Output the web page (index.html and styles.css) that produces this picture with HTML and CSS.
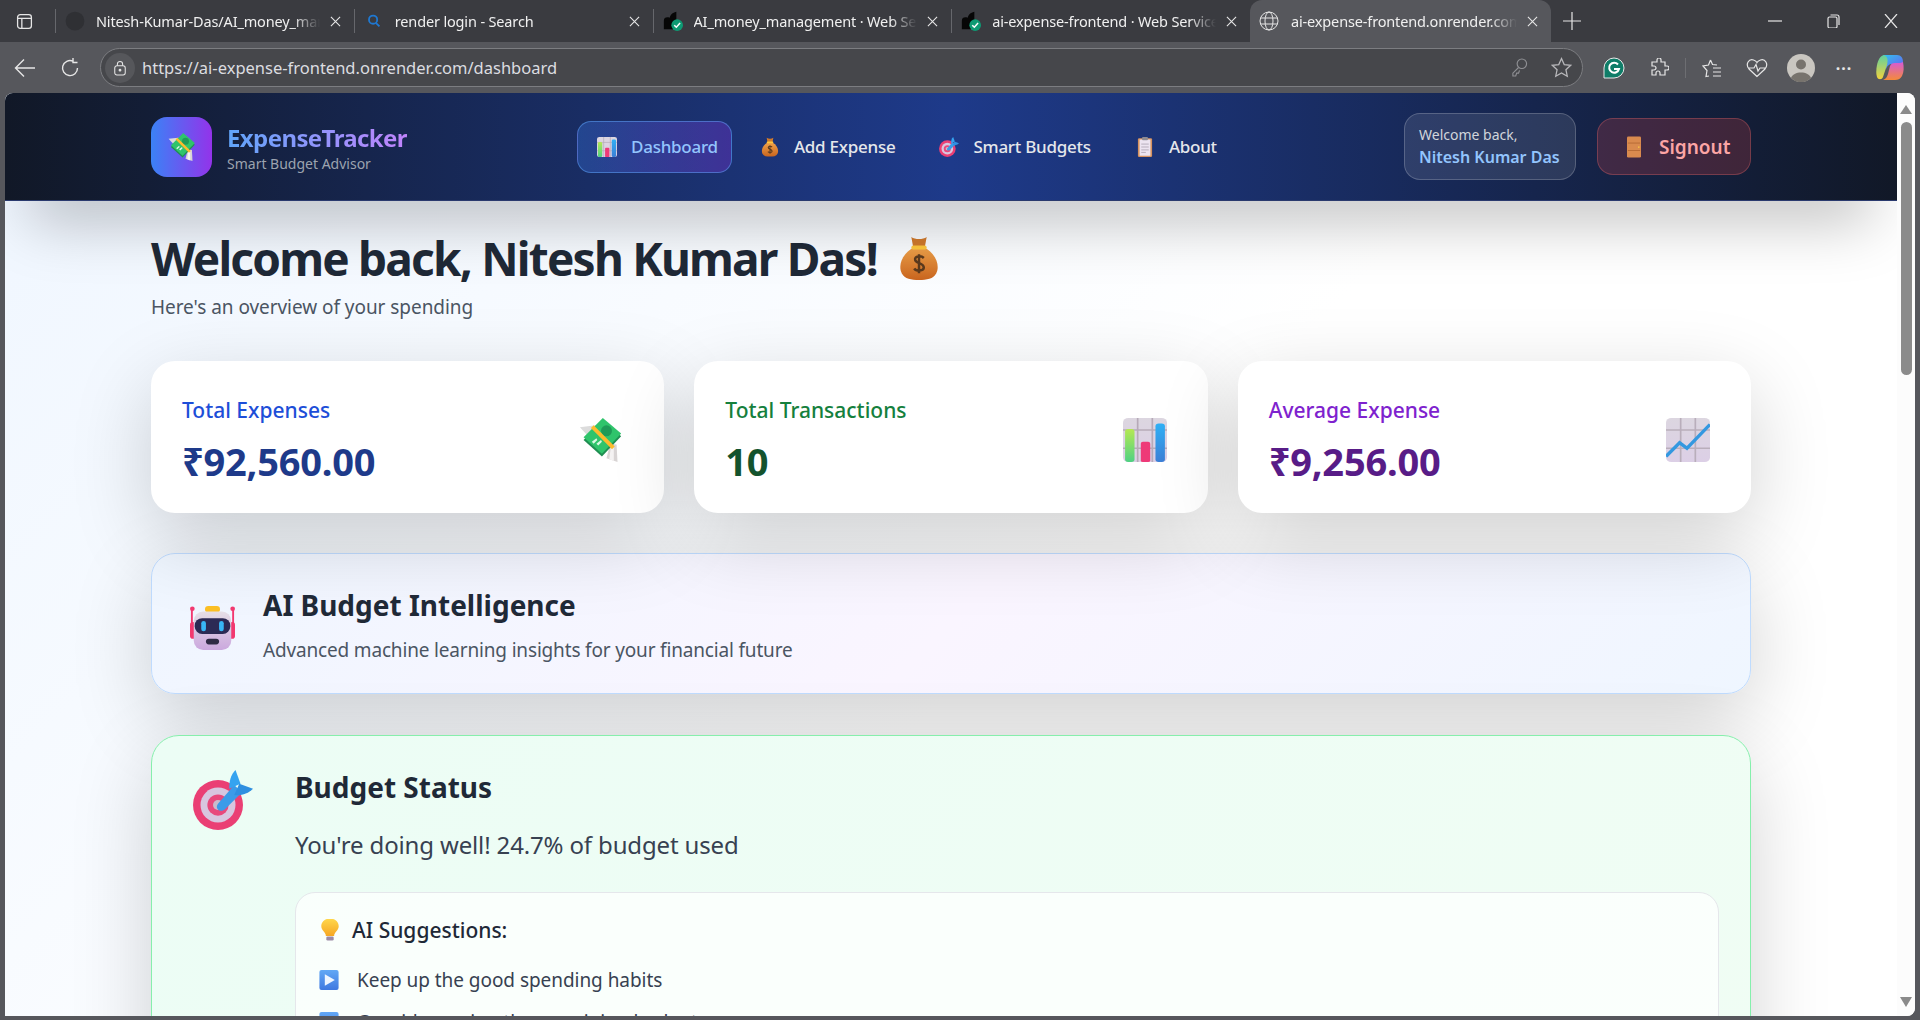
FILE: index.html
```html
<!DOCTYPE html>
<html lang="en">

<head>
    <meta charset="UTF-8">
    <title>ExpenseTracker - Dashboard</title>
    <link rel="stylesheet" href="styles.css">
</head>

<body>
    <!-- shared emoji drawings -->
    <svg class="defs" aria-hidden="true">
        <defs>
            <linearGradient id="gBag" x1="0" y1="0" x2="0" y2="1">
                <stop offset="0" stop-color="#f0a24a" />
                <stop offset="1" stop-color="#c9651f" />
            </linearGradient>
            <linearGradient id="gPaper" x1="0" y1="0" x2="0" y2="1">
                <stop offset="0" stop-color="#dcd6e0" />
                <stop offset="1" stop-color="#dccfe6" />
            </linearGradient>
            <linearGradient id="gGreen" x1="0" y1="0" x2="0" y2="1">
                <stop offset="0" stop-color="#b5e853" />
                <stop offset="1" stop-color="#4fd183" />
            </linearGradient>
            <linearGradient id="gBlue" x1="0" y1="0" x2="0" y2="1">
                <stop offset="0" stop-color="#2fb0f5" />
                <stop offset="1" stop-color="#3c7fd6" />
            </linearGradient>
            <linearGradient id="gRobot" x1="0" y1="0" x2="0" y2="1">
                <stop offset="0" stop-color="#e6dfe6" />
                <stop offset="1" stop-color="#cba8de" />
            </linearGradient>
            <linearGradient id="gPlay" x1="0" y1="0" x2="0" y2="1">
                <stop offset="0" stop-color="#62a8f5" />
                <stop offset="1" stop-color="#3f78e0" />
            </linearGradient>
            <linearGradient id="gBulb" x1="0" y1="0" x2="0" y2="1">
                <stop offset="0" stop-color="#ffd84d" />
                <stop offset="1" stop-color="#f6a623" />
            </linearGradient>
            <linearGradient id="gCoTop" x1="0" y1="0" x2="1" y2="1">
                <stop offset="0" stop-color="#2fc6f0" />
                <stop offset="1" stop-color="#6a5cf0" />
            </linearGradient>
            <linearGradient id="gCoLeft" x1="0" y1="0" x2="0" y2="1">
                <stop offset="0" stop-color="#5fd0a0" />
                <stop offset="1" stop-color="#f2d23c" />
            </linearGradient>
            <linearGradient id="gCoRight" x1="0" y1="0" x2="0" y2="1">
                <stop offset="0" stop-color="#d65ad6" />
                <stop offset="1" stop-color="#f58a3a" />
            </linearGradient>
        </defs>
        <symbol id="e-wings" viewBox="0 0 48 48">
            <path d="M1 10 L18 8 L24 22 L12 22 Z" fill="#dcdcdc" />
            <path d="M34 28 L41 29 L42 48 L30 44 Z" fill="#d8d4d4" />
            <path d="M35 30 L38 31 L38 47 L33 45 Z" fill="#f4f2f2" />
            <path d="M26 2 L46 20 L25 42 L5 24 Z" fill="#1f8f52" />
            <path d="M26 0 L46 17 L25 39 L5 21 Z" fill="#2fc46b" />
            <circle cx="30" cy="14" r="6" fill="#1f9a57" />
            <path d="M13 11 L16 8 L39 31 L36 34 Z" fill="#fdbb2d" />
            <path d="M14 26 l5 -4 l1 2 l-4 4 z M19 28 l5 -4 l1 2 l-4 4 z" fill="#d9f7e2" />
        </symbol>
        <symbol id="e-bars" viewBox="3 0 42 48" preserveAspectRatio="none">
            <rect x="3" y="0" width="42" height="48" rx="5" fill="url(#gPaper)" />
            <path d="M3 13 H45 M3 33 H45 M17 0 V48 M31 0 V48" stroke="#b6aab8" stroke-width="1.6" />
            <rect x="5" y="12" width="9" height="36" rx="3" fill="url(#gGreen)" />
            <rect x="20" y="26" width="9" height="22" rx="2" fill="#ee3a78" />
            <rect x="34" y="6" width="9" height="42" rx="3" fill="url(#gBlue)" />
        </symbol>
        <symbol id="e-line" viewBox="3 0 42 48" preserveAspectRatio="none">
            <rect x="3" y="0" width="42" height="48" rx="5" fill="url(#gPaper)" />
            <path d="M3 13 H45 M3 33 H45 M17 0 V48 M31 0 V48" stroke="#b9aebb" stroke-width="1.6" />
            <path d="M3 42 L16 27 L23 33 L45 7" fill="none" stroke="#3498e0" stroke-width="3.4" />
        </symbol>
        <symbol id="e-bag" viewBox="0 0 48 48">
            <path d="M16 2 C20 5 28 5 32 2 L30 13 H18 Z" fill="#d07a2c" />
            <path d="M18 13 H30 C42 20 46 32 42 40 C39 46 32 47 24 47 C16 47 9 46 6 40 C2 32 6 20 18 13 Z" fill="url(#gBag)" />
            <rect x="16" y="11" width="16" height="4" rx="2" fill="#ffc83d" />
            <path d="M29 24 C26 21 19 22 20 26 C21 30 29 29 29 34 C29 38 21 38 19 35 M24 20 V40" fill="none" stroke="#5b3a1e" stroke-width="2.6" />
        </symbol>
        <symbol id="e-dart" viewBox="0 0 48 48">
            <circle cx="20" cy="28" r="20" fill="#ea3f74" />
            <circle cx="20" cy="28" r="14" fill="#d8c6df" />
            <circle cx="20" cy="28" r="8.500" fill="#e8497c" />
            <circle cx="20" cy="28" r="4" fill="#c9bccb" />
            <path d="M20 27 L33 12 L39 18 L26 31 C22 35 17 31 20 27 Z" fill="#3b9be8" />
            <path d="M34 0 L38 11 L29 15 C29 9 30 4 34 0 Z" fill="#35a3f0" />
            <path d="M48 15 L37 11 L33 20 C38 21 44 19 48 15 Z" fill="#2f8fe0" />
        </symbol>
        <symbol id="e-clip" viewBox="0 0 48 48">
            <rect x="7" y="3" width="34" height="45" rx="3" fill="#d6925f" />
            <rect x="11" y="6" width="26" height="39" fill="#ece4f0" />
            <rect x="17" y="0" width="14" height="8" rx="2" fill="#8d8a92" />
            <path d="M15 17 H33 M15 24 H33 M15 31 H33 M15 37 H26" stroke="#aca3b2" stroke-width="2" />
        </symbol>
        <symbol id="e-door" viewBox="0 0 32 48">
            <rect x="0" y="0" width="32" height="48" rx="3" fill="#d98a4e" />
            <path d="M2 15 H30 M2 32 H30" stroke="#a95f2d" stroke-width="1.6" />
            <circle cx="27" cy="24" r="2" fill="#f6c244" />
        </symbol>
        <symbol id="e-robot" viewBox="0 0 48 48">
            <path d="M2 4 V34 M46 4 V34" stroke="#f2386f" stroke-width="2" />
            <circle cx="2.500" cy="4" r="2.500" fill="#f2386f" />
            <circle cx="45.500" cy="4" r="2.500" fill="#f2386f" />
            <rect x="0" y="18" width="6" height="18" rx="3" fill="#f2386f" />
            <rect x="42" y="18" width="6" height="18" rx="3" fill="#f2386f" />
            <rect x="16" y="1" width="16" height="7" rx="3.500" fill="#fbbf24" />
            <rect x="4" y="7" width="40" height="41" rx="10" fill="url(#gRobot)" />
            <rect x="5" y="14" width="38" height="17" rx="8" fill="#2c2a54" />
            <rect x="12" y="17" width="5" height="11" rx="2.500" fill="#38b6f5" />
            <rect x="31" y="17" width="5" height="11" rx="2.500" fill="#38b6f5" />
            <rect x="17" y="36" width="14" height="6" rx="3" fill="#2f2b45" />
        </symbol>
        <symbol id="e-bulb" viewBox="0 0 48 48">
            <path d="M24 0 C11 0 5 9 5 17 C5 26 15 30 15 38 H33 C33 30 43 26 43 17 C43 9 37 0 24 0 Z" transform="translate(0 -1)" fill="url(#gBulb)" />
            <rect x="16" y="38" width="16" height="9" rx="3" fill="#9b8aa5" />
        </symbol>
        <symbol id="e-play" viewBox="0 0 48 48">
            <rect x="1" y="0" width="46" height="48" rx="5" fill="url(#gPlay)" />
            <path d="M14 10 L38 24 L14 38 Z" fill="#eef5ff" />
        </symbol>
        <symbol id="fav-render" viewBox="0 0 24 24">
            <path d="M1 12 C1 8 4 7 8 8 C9 5 11 2 16 1 V14 L12 22 H1 Z" fill="#060606" />
            <circle cx="17" cy="17" r="7" fill="#0e9a73" />
            <path d="M13.500 17 L16 19.500 L20.500 14.500" fill="none" stroke="#fff" stroke-width="1.800" />
        </symbol>
    </svg>

    <!-- BROWSER TABS -->
    <div class="tabstrip">
        <svg class="ico side-ico" viewBox="0 0 16 16"><rect x="1.500" y="1.500" width="13" height="13" rx="2.500" /><path d="M1.500 5 H14.500 M5.500 5 V14.500" /></svg>
        <div class="tab">
            <svg class="fav" viewBox="0 0 16 16"><circle cx="8" cy="8" r="7.500" fill="#2f3034" /></svg>
            <span class="tab-title">Nitesh-Kumar-Das/AI_money_management</span>
            <svg class="ico tab-x" viewBox="0 0 12 12"><path d="M1 1 L11 11 M11 1 L1 11" /></svg>
        </div>
        <div class="tab">
            <svg class="fav" viewBox="-3 -3 22 22"><circle cx="7" cy="6.500" r="4.500" fill="none" stroke="#1f78d1" stroke-width="2" /><path d="M10 10 L14 14" stroke="#1f78d1" stroke-width="2" /></svg>
            <span class="tab-title">render login - Search</span>
            <svg class="ico tab-x" viewBox="0 0 12 12"><path d="M1 1 L11 11 M11 1 L1 11" /></svg>
        </div>
        <div class="tab">
            <svg class="fav"><use href="#fav-render" /></svg>
            <span class="tab-title">AI_money_management · Web Service</span>
            <svg class="ico tab-x" viewBox="0 0 12 12"><path d="M1 1 L11 11 M11 1 L1 11" /></svg>
        </div>
        <div class="tab">
            <svg class="fav"><use href="#fav-render" /></svg>
            <span class="tab-title">ai-expense-frontend · Web Service</span>
            <svg class="ico tab-x" viewBox="0 0 12 12"><path d="M1 1 L11 11 M11 1 L1 11" /></svg>
        </div>
        <div class="tab active">
            <svg class="ico fav globe" viewBox="0 0 20 20"><circle cx="10" cy="10" r="9" /><ellipse cx="10" cy="10" rx="4" ry="9" /><path d="M1.500 7 H18.500 M1.500 13 H18.500" /></svg>
            <span class="tab-title">ai-expense-frontend.onrender.com/dashboard</span>
            <svg class="ico tab-x" viewBox="0 0 12 12"><path d="M1 1 L11 11 M11 1 L1 11" /></svg>
        </div>
        <svg class="ico plus" viewBox="0 0 18 18"><path d="M9 0 V18 M0 9 H18" /></svg>
        <div class="win-btns">
            <svg class="ico" viewBox="0 0 14 14"><path d="M0 7 H14" /></svg>
            <svg class="ico" viewBox="0 0 14 14"><rect x="2" y="3" width="9" height="11" rx="1.500" /><path d="M4.500 1 H11 C12.500 1 13 2 13 3 V11" /></svg>
            <svg class="ico" viewBox="0 0 14 14"><path d="M1 0 L13 14 M13 0 L1 14" /></svg>
        </div>
    </div>

    <!-- ADDRESS BAR -->
    <div class="toolbar">
        <svg class="ico back" viewBox="0 0 22 20"><path d="M21 10 H2 M10 1.500 L1.500 10 L10 18.500" /></svg>
        <svg class="ico reload" viewBox="0 0 20 20"><path d="M17.500 10 A7.500 7.500 0 1 1 13 3.200 M13 0 V4.500 H17.500" /></svg>
        <div class="omnibox">
            <span class="lock-wrap"><svg class="ico" viewBox="0 0 16 18"><rect x="2" y="6.500" width="12" height="10.500" rx="2.500" /><path d="M5 6.500 V4.500 A3 3 0 0 1 11 4.500 V6.500" /><circle cx="8" cy="11.500" r="1" fill="#e8e8e8" /></svg></span>
            <span class="url">https://ai-expense-frontend.onrender.com/dashboard</span>
            <svg class="ico key" viewBox="0 0 18 20"><circle cx="11.500" cy="6" r="5" /><path d="M8 10 L2 16 V19 H5 L6 16 H8 L9 13" /></svg>
            <svg class="ico star" viewBox="0 0 20 20"><path d="M10 1.500 L12.600 7.200 L18.800 7.900 L14.200 12.100 L15.500 18.300 L10 15.200 L4.500 18.300 L5.800 12.100 L1.200 7.900 L7.400 7.200 Z" /></svg>
        </div>
        <div class="tool-icons">
            <svg class="t-g" viewBox="0 0 22 22"><path d="M11 1 A10 10 0 0 1 11 21 H1 V11 A10 10 0 0 1 11 1 Z" fill="#0f7d68" stroke="#e8e8e8" stroke-width="1" /><path d="M15 7.500 A5 5 0 1 0 16 12 H11" fill="none" stroke="#fff" stroke-width="2" /></svg>
            <svg class="ico t-ext" viewBox="0 0 20 20"><path d="M8 2 A2 2 0 0 1 12 2 V4 H16 V8 H18 A2 2 0 0 1 18 12 H16 V17 H11 V15 A2 2 0 0 0 7 15 V17 H3 V12 H5 A2 2 0 0 0 5 8 H3 V4 H8 Z" /></svg>
            <span class="t-sep"></span>
            <svg class="ico t-fav" viewBox="0 0 20 20"><path d="M8.500 2 L10.500 6.500 L15 7 M7 18 L4 18.500 L5 12.500 L1 8 L6.500 7 L8.500 2 M11 10 H19 M11 14 H19 M11 18 H19" /></svg>
            <svg class="ico t-heart" viewBox="0 0 22 20"><path d="M11 18.500 L3 11 C-1 6 3 0.500 7.500 2 C9 2.500 10.500 3.500 11 4.500 C11.500 3.500 13 2.500 14.500 2 C19 0.500 23 6 19 11 Z M2 10 H8 L10 6.500 L12 13 L14 10 H20" /></svg>
            <svg class="t-avatar" viewBox="0 0 28 28"><circle cx="14" cy="14" r="14" fill="#c9c6c0" /><circle cx="14" cy="10.500" r="5" fill="#77736d" /><path d="M4 24 C6 16.500 22 16.500 24 24 A14 14 0 0 1 4 24 Z" fill="#77736d" /></svg>
            <span class="t-dots">···</span>
            <svg class="t-copilot" viewBox="0 0 30 27">
                <path d="M9 1 H22 C26 1 28 4 28 8 L28 10 L17 10 C14 10 12 12 11 15 L7 7 C7 4 7 2 9 1 Z" fill="url(#gCoTop)" />
                <path d="M9 1 C5 2 3 6 2 11 C1 16 1 20 2 23 C3 26 7 26 8 23 L12 11 C13 6 13 3 9 1 Z" fill="url(#gCoLeft)" />
                <path d="M28 8 C29 13 29 18 27 22 C25 25 23 26 20 26 H8 C11 25 12 23 13 20 L15 12 C16 10 17 9 20 9 C24 9 27 9 28 8 Z" fill="url(#gCoRight)" />
            </svg>
        </div>
    </div>

    <!-- PAGE -->
    <div class="viewport">
        <div class="page">
            <header class="topbar">
                <div class="topbar-in">
                    <div class="brand">
                        <div class="logo"><svg class="logo-ico"><use href="#e-wings" /></svg></div>
                        <div class="brand-text">
                            <div class="brand-name">ExpenseTracker</div>
                            <div class="brand-sub">Smart Budget Advisor</div>
                        </div>
                    </div>
                    <nav class="nav">
                        <a class="nav-item on"><svg class="nav-ico"><use href="#e-bars" /></svg>Dashboard</a>
                        <a class="nav-item"><svg class="nav-ico"><use href="#e-bag" /></svg>Add Expense</a>
                        <a class="nav-item"><svg class="nav-ico"><use href="#e-dart" /></svg>Smart Budgets</a>
                        <a class="nav-item"><svg class="nav-ico"><use href="#e-clip" /></svg>About</a>
                    </nav>
                    <div class="user-box">
                        <div class="user-hi">Welcome back,</div>
                        <div class="user-name">Nitesh Kumar Das</div>
                    </div>
                    <button class="signout"><svg class="door"><use href="#e-door" /></svg>Signout</button>
                </div>
            </header>

            <main class="content">
                <h1 class="title">Welcome back, Nitesh Kumar Das! <svg class="title-ico"><use href="#e-bag" /></svg></h1>
                <p class="lead">Here's an overview of your spending</p>

                <section class="stats">
                    <div class="stat">
                        <div>
                            <div class="stat-label blue">Total Expenses</div>
                            <div class="stat-value blue-d">₹92,560.00</div>
                        </div>
                        <svg class="stat-ico"><use href="#e-wings" /></svg>
                    </div>
                    <div class="stat">
                        <div>
                            <div class="stat-label green">Total Transactions</div>
                            <div class="stat-value green-d">10</div>
                        </div>
                        <svg class="stat-ico"><use href="#e-bars" /></svg>
                    </div>
                    <div class="stat">
                        <div>
                            <div class="stat-label purple">Average Expense</div>
                            <div class="stat-value purple-d">₹9,256.00</div>
                        </div>
                        <svg class="stat-ico"><use href="#e-line" /></svg>
                    </div>
                </section>

                <section class="ai-card">
                    <svg class="ai-ico"><use href="#e-robot" /></svg>
                    <div>
                        <h2 class="ai-title">AI Budget Intelligence</h2>
                        <p class="ai-sub">Advanced machine learning insights for your financial future</p>
                    </div>
                </section>

                <section class="status-card">
                    <svg class="status-ico"><use href="#e-dart" /></svg>
                    <div class="status-body">
                        <h3 class="status-title">Budget Status</h3>
                        <p class="status-sub">You're doing well! 24.7% of budget used</p>
                        <div class="tips">
                            <h4 class="tips-title"><svg class="bulb"><use href="#e-bulb" /></svg>AI Suggestions:</h4>
                            <ul class="tips-list">
                                <li><svg class="play"><use href="#e-play" /></svg>Keep up the good spending habits</li>
                                <li><svg class="play"><use href="#e-play" /></svg>Consider saving the remaining budget</li>
                            </ul>
                        </div>
                    </div>
                </section>
            </main>
        </div>

        <div class="scrollbar">
            <span class="arrow up"></span>
            <span class="thumb"></span>
            <span class="arrow down"></span>
        </div>
    </div>
</body>

</html>
```

FILE: styles.css
```css
* {
    margin: 0;
    padding: 0;
    box-sizing: border-box;
}

body {
    width: 1920px;
    height: 1020px;
    overflow: hidden;
    display: flex;
    flex-direction: column;
    background: #56575c;
    font-family: "Noto Sans", "Open Sans", sans-serif;
}

.defs {
    position: absolute;
    width: 0;
    height: 0;
}

.ico {
    fill: none;
    stroke: #e6e6e6;
    stroke-width: 1.2;
}

/* TABS */
.tabstrip {
    height: 42px;
    display: flex;
    align-items: center;
    background: #3a3b40;
    color: #f0f0f0;
    font-size: 14.5px;
}

.side-ico {
    width: 17px;
    height: 17px;
    margin: 0 22px 0 16px;
}

.tab {
    width: 298.750px;
    height: 24px;
    padding-left: 9px;
    display: flex;
    align-items: center;
    border-left: 1px solid #66676c;
}

.fav {
    width: 20px;
    height: 20px;
    flex: none;
    margin-right: 11px;
}

.tab-title {
    flex: 1;
    min-width: 0;
    white-space: nowrap;
    overflow: hidden;
    letter-spacing: -0.15px;
    -webkit-mask-image: linear-gradient(90deg, #000 88%, transparent);
}

.tab-x {
    width: 11px;
    height: 11px;
    flex: none;
    margin: 0 13px 0 10px;
}

.tab.active {
    width: 301px;
    height: 42px;
    border-left: 0;
    border-radius: 12px 12px 0 0;
    background: #56575c;
}

.globe {
    margin-right: 12px;
    stroke-width: 1;
}

.plus {
    width: 18px;
    height: 18px;
    margin-left: 12px;
}

.win-btns {
    margin-left: auto;
    display: flex;
    gap: 44px;
    padding-right: 22px;
}

.win-btns svg {
    width: 14px;
    height: 14px;
}

/* TOOLBAR */
.toolbar {
    height: 51px;
    display: flex;
    align-items: center;
    padding: 0 12px 0 14px;
}

.back {
    width: 22px;
    height: 20px;
    stroke-width: 1.4;
}

.reload {
    width: 20px;
    height: 20px;
    margin-left: 24px;
    stroke-width: 1.4;
}

.omnibox {
    width: 1483px;
    height: 39px;
    margin-left: 20px;
    display: flex;
    align-items: center;
    padding-left: 4px;
    border: 1px solid #7c7d81;
    border-radius: 20px;
    background: #46474b;
}

.lock-wrap {
    width: 30px;
    height: 30px;
    display: flex;
    align-items: center;
    justify-content: center;
    border-radius: 50%;
    background: #56575b;
}

.lock-wrap svg {
    width: 14px;
    height: 16px;
}

.url {
    margin-left: 7px;
    font-size: 16.500px;
    color: #dcdde0;
}

.key {
    width: 17px;
    height: 19px;
    margin-left: auto;
    stroke: #8f9094;
}

.star {
    width: 21px;
    height: 21px;
    margin: 0 10px 0 23px;
    stroke: #b8b8bb;
}

.tool-icons {
    display: flex;
    align-items: center;
    margin-left: 20px;
}

.t-g {
    width: 22px;
    height: 22px;
}

.t-ext {
    width: 20px;
    height: 20px;
    margin-left: 24px;
}

.t-sep {
    width: 1px;
    height: 20px;
    margin: 0 16px;
    background: #6d6e72;
}

.t-fav {
    width: 20px;
    height: 20px;
}

.t-heart {
    width: 22px;
    height: 20px;
    margin-left: 24px;
}

.t-avatar {
    width: 28px;
    height: 28px;
    margin-left: 19px;
}

.t-dots {
    width: 20px;
    margin-left: 19px;
    color: #e6e6e6;
    font-size: 16px;
    font-weight: 700;
    letter-spacing: 1px;
    text-align: center;
}

.t-copilot {
    width: 30px;
    height: 27px;
    margin-left: 21px;
}

/* VIEWPORT */
.viewport {
    width: 1910px;
    height: 923px;
    margin-left: 5px;
    display: flex;
    overflow: hidden;
    border-radius: 8px 8px 8px 0;
    background: #fff;
}

.page {
    width: 1892px;
    overflow: hidden;
    background: linear-gradient(135deg, #eff6ff 0%, #fff 55%, #fff 100%);
}

.scrollbar {
    width: 18px;
    display: flex;
    flex-direction: column;
    align-items: center;
    background: #fcfcfc;
    padding-top: 12px;
}

.arrow {
    width: 0;
    height: 0;
    border-left: 6px solid transparent;
    border-right: 6px solid transparent;
}

.arrow.up {
    border-bottom: 9px solid #8a8a8a;
}

.arrow.down {
    margin-top: 622px;
    border-top: 10px solid #8a8a8a;
}

.thumb {
    width: 11px;
    height: 253px;
    margin-top: 8px;
    border-radius: 6px;
    background: #8b8b8b;
}

/* HEADER */
.topbar {
    position: relative;
    height: 108px;
    background: linear-gradient(90deg, #111827, #1e3a8a 50%, #111827);
    border-bottom: 1px solid #2a3a6e;
    box-shadow: 0 45px 60px -25px rgba(0, 0, 0, 0.25);
}

.topbar-in {
    width: 1600px;
    height: 107px;
    margin: 0 auto;
    display: flex;
    align-items: center;
}

.brand {
    width: 256px;
    flex: none;
    display: flex;
    align-items: center;
    gap: 15px;
}

.brand-text {
    flex: none;
    padding-top: 2px;
}

.logo {
    width: 61px;
    height: 60px;
    flex: none;
    display: flex;
    align-items: center;
    justify-content: center;
    border-radius: 16px;
    background: linear-gradient(90deg, #3b82f6, #9333ea);
}

.logo-ico {
    width: 28px;
    height: 28px;
}

.brand-name {
    font-size: 24px;
    font-weight: 700;
    line-height: 32px;
    letter-spacing: -0.6px;
    background: linear-gradient(90deg, #60a5fa, #c084fc);
    -webkit-background-clip: text;
    background-clip: text;
    color: transparent;
}

.brand-sub {
    font-size: 14px;
    line-height: 20px;
    color: #9ca3af;
}

.nav {
    display: flex;
    align-items: center;
    gap: 8px;
    margin-left: 170px;
}

.nav-item {
    display: flex;
    align-items: center;
    gap: 14px;
    height: 52px;
    padding: 0 15px 0 19px;
    border: 1px solid transparent;
    border-radius: 14px;
    color: #e5e7eb;
    font-size: 17px;
    font-weight: 500;
    letter-spacing: -0.25px;
    white-space: nowrap;
}

.nav-item.on {
    padding-right: 13px;
    color: #93c5fd;
    background: linear-gradient(90deg, rgba(59, 130, 246, 0.3), rgba(147, 51, 234, 0.3));
    border-color: rgba(96, 165, 250, 0.5);
}

.nav-ico {
    width: 20px;
    height: 20px;
    flex: none;
}

.user-box {
    width: 172px;
    height: 67px;
    margin-left: auto;
    padding: 0 14px;
    display: flex;
    flex-direction: column;
    justify-content: center;
    border: 1px solid rgba(255, 255, 255, 0.2);
    border-radius: 16px;
    background: rgba(255, 255, 255, 0.1);
}

.user-hi {
    font-size: 14px;
    line-height: 20px;
    color: #d1d5db;
}

.user-name {
    font-size: 16px;
    font-weight: 600;
    line-height: 24px;
    color: #93c5fd;
    white-space: nowrap;
}

.signout {
    width: 154px;
    height: 57px;
    margin-left: 21px;
    padding-left: 29px;
    display: flex;
    align-items: center;
    gap: 18px;
    border: 1px solid rgba(248, 113, 113, 0.3);
    border-radius: 16px;
    background: rgba(239, 68, 68, 0.2);
    color: #fca5a5;
    font-family: inherit;
    font-size: 19px;
    font-weight: 600;
}

.door {
    width: 14px;
    height: 22px;
    flex: none;
}

/* CONTENT */
.content {
    width: 1600px;
    margin: 0 auto;
}

.title {
    margin-top: 27px;
    display: flex;
    align-items: center;
    height: 60px;
    font-size: 46px;
    font-weight: 700;
    letter-spacing: -1.8px;
    white-space: pre;
    color: #1f2937;
}

.title-ico {
    width: 46px;
    height: 46px;
    margin-left: 9px;
}

.lead {
    margin-top: 5px;
    font-size: 19px;
    line-height: 28px;
    letter-spacing: -0.05px;
    color: #4b5563;
}

.stats {
    display: grid;
    grid-template-columns: repeat(3, 1fr);
    gap: 30px;
    margin-top: 40px;
}

.stat {
    height: 152px;
    padding: 3px 41px 0 31px;
    display: flex;
    align-items: center;
    justify-content: space-between;
    border-radius: 24px;
    background: #fff;
    box-shadow: 0 25px 80px rgba(0, 0, 0, 0.18);
}

.stat-label {
    font-size: 21px;
    font-weight: 500;
    line-height: 28px;
}

.stat-value {
    margin-top: 17px;
    font-size: 38px;
    font-weight: 700;
    line-height: 40px;
    letter-spacing: -0.2px;
}

.blue { color: #1d4ed8; }
.blue-d { color: #1e3a8a; }
.green { color: #15803d; }
.green-d { color: #14532d; }
.purple { color: #7e22ce; }
.purple-d { color: #581c87; }

.stat-ico {
    width: 44px;
    height: 44px;
    margin-top: 3px;
}

.ai-card {
    height: 141px;
    margin-top: 40px;
    padding: 4px 38px 0;
    display: flex;
    align-items: center;
    gap: 28px;
    border: 1px solid #bfdbfe;
    border-radius: 24px;
    background: linear-gradient(135deg, #eff6ff, #faf5ff 50%, #eff6ff);
    box-shadow: 0 25px 80px rgba(0, 0, 0, 0.18);
}

.ai-ico {
    width: 45px;
    height: 45px;
    flex: none;
    margin-top: 3px;
}

.ai-title {
    font-size: 28px;
    font-weight: 700;
    line-height: 36px;
    color: #1f2937;
}

.ai-sub {
    margin-top: 13px;
    font-size: 19px;
    line-height: 28px;
    letter-spacing: -0.17px;
    color: #4b5563;
}

.status-card {
    margin-top: 41px;
    height: 400px;
    padding: 33px 31px 0 41px;
    display: flex;
    gap: 42px;
    border: 1px solid #86efac;
    border-radius: 28px;
    background: linear-gradient(135deg, #ecfdf5, #f0fdf4);
    box-shadow: 0 25px 80px rgba(0, 0, 0, 0.18);
}

.status-ico {
    width: 60px;
    height: 60px;
    flex: none;
    margin-top: 1px;
}

.status-body {
    flex: 1;
}

.status-title {
    font-size: 28px;
    font-weight: 700;
    line-height: 36px;
    color: #1f2937;
}

.status-sub {
    margin-top: 24px;
    font-size: 24px;
    line-height: 32px;
    letter-spacing: -0.15px;
    color: #374151;
}

.tips {
    height: 300px;
    margin-top: 31px;
    padding: 19px 23px;
    border: 1px solid #e5e7eb;
    border-radius: 20px;
    background: rgba(255, 255, 255, 0.7);
}

.tips-title {
    display: flex;
    align-items: center;
    height: 36px;
    font-size: 21px;
    font-weight: 500;
    color: #1f2937;
}

.bulb {
    width: 22px;
    height: 22px;
    margin-right: 11px;
}

.tips-list {
    list-style: none;
    margin-top: 11px;
}

.tips-list li {
    display: flex;
    align-items: center;
    height: 42px;
    font-size: 19px;
    letter-spacing: -0.05px;
    color: #374151;
}

.play {
    width: 20px;
    height: 20px;
    margin-right: 18px;
}
```
